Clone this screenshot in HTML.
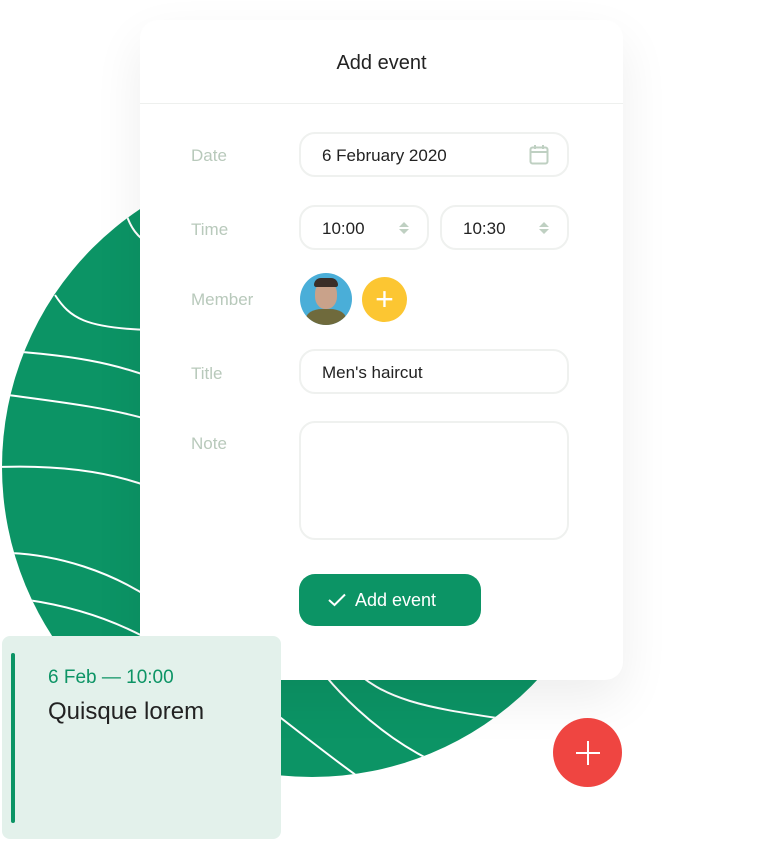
<!DOCTYPE html>
<html><head><style>
body{margin:0;width:780px;height:845px;background:#fff;position:relative;overflow:hidden;font-family:"Liberation Sans",Roboto,sans-serif}
.card{position:absolute;left:140px;top:20px;width:483px;height:660px;background:#fff;border-radius:18px;box-shadow:0 20px 50px rgba(0,0,0,0.07)}
.hd{height:83px;border-bottom:1px solid #eef0ee;text-align:center;line-height:86px;font-size:20px;color:#222}
.lbl{position:absolute;left:51px;font-size:17px;color:#b8c9bb}
.inp{position:absolute;border:2px solid #eff1ef;border-radius:16px;box-sizing:border-box;font-size:17px;color:#222;padding-left:21px;line-height:43px;height:45px}
</style></head><body>
<svg width="780" height="845" style="position:absolute;left:0;top:0">
<defs><clipPath id="c"><circle cx="312" cy="467" r="310"/></clipPath></defs>
<circle cx="312" cy="467" r="310" fill="#0c9465"/>
<g clip-path="url(#c)" stroke="#fff" stroke-width="2" fill="none">
<path d="M125 210 C130 228 138 238 150 244"/>
<path d="M55 295 C70 318 85 328 150 330"/>
<path d="M22 352 C70 356 110 362 150 377"/>
<path d="M8 395 C60 402 110 408 150 420"/>
<path d="M0 467 C60 465 110 472 150 487"/>
<path d="M10 553 C60 555 110 572 150 598"/>
<path d="M28 600 C70 606 110 618 150 640"/>
<path d="M230 680 C260 700 320 750 360 778"/>
<path d="M300 640 C330 690 380 735 430 760"/>
<path d="M350 665 C380 700 430 708 497 718"/>
</g>
</svg>
<div class="card">
<div class="hd">Add event</div>
<div class="lbl" style="top:126px">Date</div>
<div class="inp" style="left:159px;top:112px;width:270px">6 February 2020
<svg style="position:absolute;right:18px;top:10px" width="20" height="22" viewBox="0 0 20 22"><rect x="1.5" y="3.5" width="17" height="16" rx="2" fill="none" stroke="#bfd0c2" stroke-width="2"/><line x1="1.5" y1="8" x2="18.5" y2="8" stroke="#bfd0c2" stroke-width="2"/><line x1="6" y1="1" x2="6" y2="5" stroke="#bfd0c2" stroke-width="2"/><line x1="14" y1="1" x2="14" y2="5" stroke="#bfd0c2" stroke-width="2"/></svg></div>
<div class="lbl" style="top:200px">Time</div>
<div class="inp" style="left:159px;top:185px;width:130px">10:00<svg style="position:absolute;right:18px;top:15px" width="10" height="12"><path d="M0 5 L5 0 L10 5Z M0 7 L5 12 L10 7Z" fill="#bfd0c2"/></svg></div>
<div class="inp" style="left:300px;top:185px;width:129px">10:30<svg style="position:absolute;right:18px;top:15px" width="10" height="12"><path d="M0 5 L5 0 L10 5Z M0 7 L5 12 L10 7Z" fill="#bfd0c2"/></svg></div>
<div class="lbl" style="top:270px">Member</div>
<div style="position:absolute;left:160px;top:253px;width:52px;height:52px;border-radius:50%;background:#4aaed8;overflow:hidden">
<div style="position:absolute;left:15px;top:8px;width:22px;height:28px;border-radius:45%;background:#c9a28a"></div>
<div style="position:absolute;left:14px;top:5px;width:24px;height:9px;border-radius:10px 10px 3px 3px;background:#3a2e28"></div>
<div style="position:absolute;left:6px;top:36px;width:40px;height:24px;border-radius:40% 40% 0 0;background:#6f6a3c"></div></div>
<div style="position:absolute;left:222px;top:257px;width:45px;height:45px;border-radius:50%;background:#fcc632;color:#fff;font-size:32px;line-height:44px;text-align:center;font-weight:300">+</div>
<div class="lbl" style="top:344px">Title</div>
<div class="inp" style="left:159px;top:329px;width:270px">Men's haircut</div>
<div class="lbl" style="top:414px">Note</div>
<div class="inp" style="left:159px;top:401px;width:270px;height:119px"></div>
<div style="position:absolute;left:159px;top:554px;width:182px;height:52px;border-radius:16px;background:#0c9465;color:#fff;font-size:18px;line-height:52px">
<svg style="position:absolute;left:29px;top:19px" width="18" height="14"><path d="M1 7 L6.5 12 L17 1.5" stroke="#fff" stroke-width="2" fill="none"/></svg>
<span style="position:absolute;left:56px">Add event</span></div>
</div>
<div style="position:absolute;left:2px;top:636px;width:279px;height:203px;background:#e3f1eb;border-radius:8px">
<div style="position:absolute;left:9px;top:17px;width:4px;height:170px;background:#0c9465;border-radius:2px"></div>
<div style="position:absolute;left:46px;top:31px;font-size:19px;color:#0c9465">6 Feb — 10:00</div>
<div style="position:absolute;left:46px;top:62px;font-size:24px;color:#222">Quisque lorem</div>
</div>
<div style="position:absolute;left:553px;top:718px;width:69px;height:69px;border-radius:50%;background:#ef4541">
<div style="position:absolute;left:23px;top:34px;width:24px;height:2px;background:#fff"></div>
<div style="position:absolute;left:34px;top:23px;width:2px;height:24px;background:#fff"></div></div>
</body></html>
